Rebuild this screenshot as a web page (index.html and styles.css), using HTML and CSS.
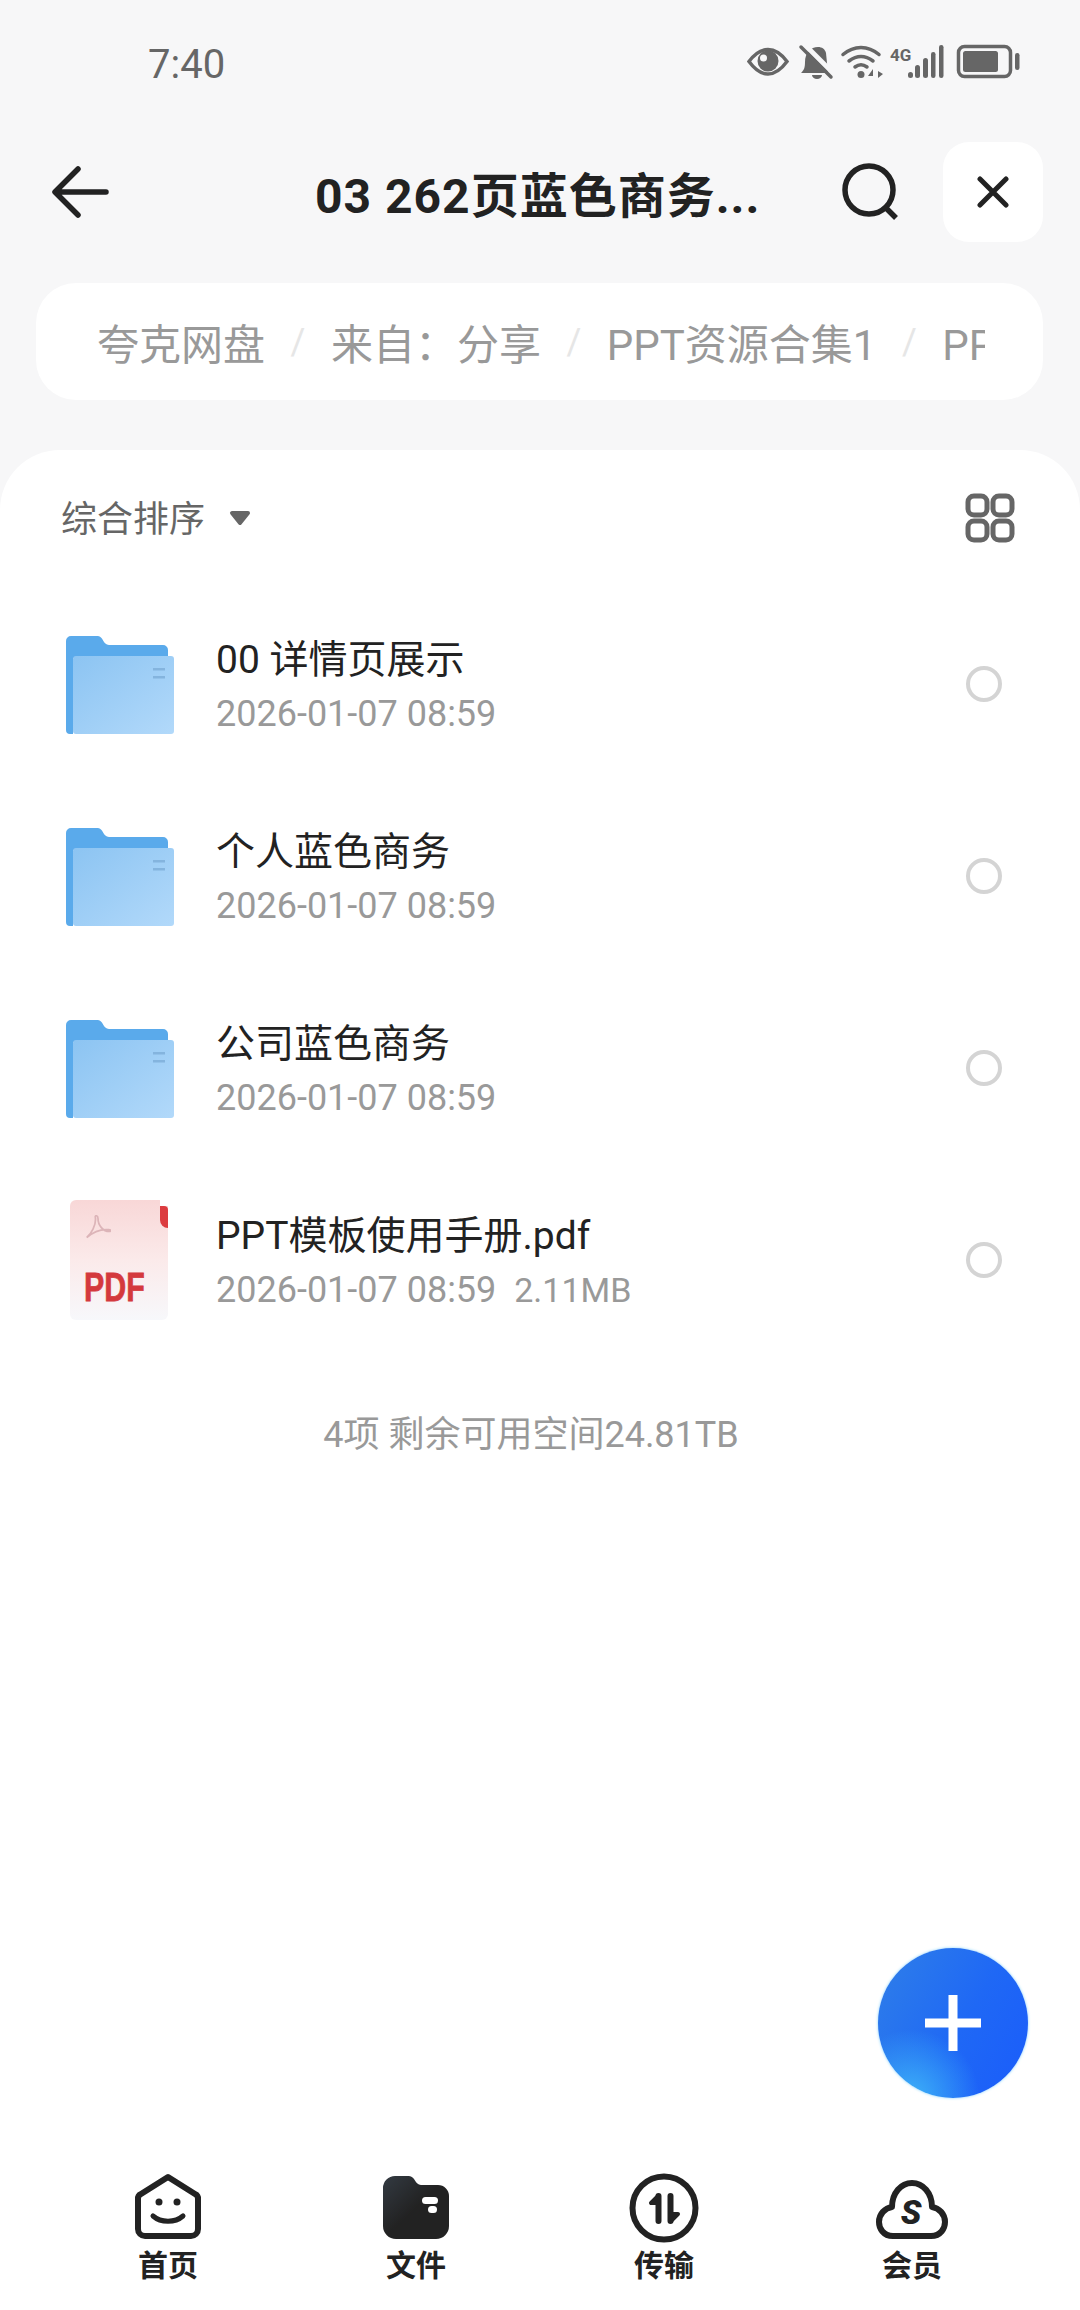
FILE: index.html
```html
<!DOCTYPE html>
<html lang="zh-CN">
<head>
  <meta charset="UTF-8">
  <title>夸克网盘</title>
  <link rel="stylesheet" href="styles.css">
</head>
<body>
  <div class="app">

    <div class="status">
      <span class="time">7:40</span>
      <svg class="status-icons" width="275" height="38" viewBox="0 0 275 38">
        <!-- eye -->
        <path d="M2 17.500C9 8 16 5.500 21 5.500S33 8 40 17.500C33 27 26 30 21 30S9 27 2 17.500Z" fill="none" stroke="#666" stroke-width="3.500"/>
        <circle cx="21" cy="17" r="10.500" fill="#666"/>
        <circle cx="16.500" cy="14" r="3.500" fill="#f7f7f8"/>
        <!-- bell off -->
        <path d="M54 29c3-3 4-5 4-11 0-9 6-15 13-15 4 0 7 2 8 6l2 20H54Z" fill="#666"/>
        <path d="M65 31h10a5 4 0 0 1-10 0Z" fill="#666"/>
        <path d="M56 -1 88 31" stroke="#f7f7f8" stroke-width="5"/>
        <path d="M54 3 84 33" stroke="#666" stroke-width="3.500" stroke-linecap="round"/>
        <!-- wifi -->
        <g fill="none" stroke="#666" stroke-width="3.500" stroke-linecap="round">
          <path d="M96 10.500C107 1 121 1 132 10.500"/>
          <path d="M102 17C110 11 118 11 126 17"/>
          <path d="M108 23C112 20 116 20 120 23"/>
        </g>
        <circle cx="114" cy="30.500" r="3.500" fill="#666"/>
        <path d="M126 34V25l-5 7h5ZM131 24v10l5-4-5-3Z" fill="#666"/>
        <!-- 4G and signal -->
        <text class="net" x="143" y="17">4G</text>
        <g fill="#666">
          <rect x="161" y="28" width="5" height="6" rx="2.500"/>
          <rect x="168" y="21" width="5" height="13" rx="2.500"/>
          <rect x="176" y="14" width="5" height="20" rx="2.500"/>
          <rect x="184" y="8" width="4.500" height="26" rx="2.200"/>
          <rect x="192" y="1" width="4.500" height="33" rx="2.200"/>
        </g>
        <!-- battery -->
        <rect x="211.500" y="2.500" width="52" height="30" rx="6" fill="none" stroke="#666" stroke-width="3.500"/>
        <rect x="216" y="7" width="35" height="21" rx="2.500" fill="#666"/>
        <rect x="268" y="9" width="4.500" height="17" rx="2.200" fill="#666"/>
      </svg>
    </div>

    <div class="topbar">
      <svg class="back" width="58" height="52" viewBox="0 0 58 52">
        <path d="M26 3 3 26l23 23M4 26h50" fill="none" stroke="#222" stroke-width="5.500" stroke-linecap="round" stroke-linejoin="round"/>
      </svg>
      <div class="title">03 262页蓝色商务...</div>
      <svg class="search" width="60" height="60" viewBox="0 0 60 60">
        <circle cx="28" cy="28" r="24" fill="none" stroke="#222" stroke-width="5.500"/>
        <path d="M45 46 55 56" stroke="#222" stroke-width="5.500"/>
      </svg>
      <div class="close-box">
        <svg width="32" height="32" viewBox="0 0 32 32">
          <path d="M3 3 29 29M29 3 3 29" stroke="#222" stroke-width="5" stroke-linecap="round"/>
        </svg>
      </div>
    </div>

    <div class="crumbs">
      <div class="crumbs-inner">
        <span>夸克网盘</span><i>/</i>
        <span>来自：分享</span><i>/</i>
        <span>PPT资源合集1</span><i>/</i>
        <span>PPT资源合集</span>
      </div>
    </div>

    <div class="sheet">
      <div class="sortbar">
        <div class="sort">
          <span class="sort-label">综合排序</span>
          <svg class="caret" width="22" height="16" viewBox="0 0 22 16">
            <path d="M3 3h16l-8 10Z" fill="#666" stroke="#666" stroke-width="4" stroke-linejoin="round"/>
          </svg>
        </div>
        <svg width="50" height="50" viewBox="0 0 50 50">
          <g fill="none" stroke="#666" stroke-width="5">
            <rect x="3" y="3" width="19" height="19" rx="6"/>
            <rect x="28" y="3" width="19" height="19" rx="6"/>
            <rect x="3" y="28" width="19" height="19" rx="6"/>
            <rect x="28" y="28" width="19" height="19" rx="6"/>
          </g>
        </svg>
      </div>

      <div class="files">
        <div class="row">
          <svg class="thumb" width="108" height="99" viewBox="0 0 108 99"><use href="#folder"/></svg>
          <div class="info">
            <div class="name">00 详情页展示</div>
            <div class="meta">2026-01-07 08:59</div>
          </div>
          <span class="radio"></span>
        </div>
        <div class="row">
          <svg class="thumb" width="108" height="99" viewBox="0 0 108 99"><use href="#folder"/></svg>
          <div class="info">
            <div class="name">个人蓝色商务</div>
            <div class="meta">2026-01-07 08:59</div>
          </div>
          <span class="radio"></span>
        </div>
        <div class="row">
          <svg class="thumb" width="108" height="99" viewBox="0 0 108 99"><use href="#folder"/></svg>
          <div class="info">
            <div class="name">公司蓝色商务</div>
            <div class="meta">2026-01-07 08:59</div>
          </div>
          <span class="radio"></span>
        </div>
        <div class="row">
          <div class="pdf">
            <svg class="acrobat" width="26" height="26" viewBox="0 0 30 30">
              <path d="M2 26C7 22 13 12 12 3c-1-3 3-3 3 1 0 8 6 15 13 15 2 0 2-2 0-2-8-1-18 2-26 9Z" fill="none" stroke="#dcb4b8" stroke-width="2"/>
            </svg>
            <span class="pdf-tab"></span>
            <span class="pdf-text">PDF</span>
          </div>
          <div class="info">
            <div class="name">PPT模板使用手册.pdf</div>
            <div class="meta">2026-01-07 08:59&nbsp;&nbsp;<span class="size">2.11MB</span></div>
          </div>
          <span class="radio"></span>
        </div>
      </div>

      <div class="summary">4项 剩余可用空间24.81TB</div>

      <div class="nav">
        <div class="tab">
          <svg width="70" height="70" viewBox="0 0 70 70">
            <path d="M35 5 62 22a5 5 0 0 1 3 5v30a7 7 0 0 1-7 7H12a7 7 0 0 1-7-7V27a5 5 0 0 1 3-5Z" fill="none" stroke="#222" stroke-width="6" stroke-linejoin="round"/>
            <circle cx="26" cy="30" r="3.500" fill="#222"/>
            <circle cx="44" cy="30" r="3.500" fill="#222"/>
            <path d="M20 44c8 7 22 7 30 0" fill="none" stroke="#222" stroke-width="5" stroke-linecap="round"/>
          </svg>
          <span>首页</span>
        </div>
        <div class="tab">
          <svg width="70" height="70" viewBox="0 0 70 70">
            <defs>
              <linearGradient id="fileDark" x1="0" y1="0" x2="1" y2="1">
                <stop offset="0" stop-color="#333a42"/>
                <stop offset="0.5" stop-color="#222"/>
              </linearGradient>
            </defs>
            <path d="M2 16A12 12 0 0 1 14 4h14c6 0 6 9 12 9h17a11 11 0 0 1 11 11v30a13 13 0 0 1-13 13H15A13 13 0 0 1 2 54Z" fill="url(#fileDark)"/>
            <rect x="41" y="25" width="16" height="7" rx="3.500" fill="#fff"/>
            <rect x="47" y="34" width="9" height="7" rx="3.500" fill="#fff"/>
          </svg>
          <span>文件</span>
        </div>
        <div class="tab">
          <svg width="70" height="72" viewBox="0 0 70 72">
            <circle cx="35" cy="36" r="31.500" fill="none" stroke="#222" stroke-width="6"/>
            <path d="M29.500 24V49M41.500 24V49" stroke="#222" stroke-width="6" stroke-linecap="round"/>
            <path d="M29 24 22 31h7ZM42 49l7-7h-7Z" fill="#222" stroke="#222" stroke-width="4" stroke-linejoin="round"/>
          </svg>
          <span class="tab-text-up">传输</span>
        </div>
        <div class="tab">
          <svg width="74" height="70" viewBox="0 0 74 70">
            <path d="M18 64C8 64 4 56 4 50c0-8 6-14 13-15C17 21 26 11 37 11s20 10 20 24c7 1 13 7 13 15 0 6-4 14-14 14Z" fill="none" stroke="#222" stroke-width="6" stroke-linejoin="round"/>
            <text class="vip" x="36" y="52">S</text>
          </svg>
          <span>会员</span>
        </div>
      </div>

      <div class="fab">
        <svg width="58" height="58" viewBox="0 0 58 58">
          <path d="M29 1v56M1 29h56" stroke="#fff" stroke-width="9"/>
        </svg>
      </div>
    </div>

  </div>

  <svg width="0" height="0" class="defs">
    <defs>
      <linearGradient id="folderFront" x1="0" y1="0" x2="1" y2="1">
        <stop offset="0" stop-color="#8cc4f2"/>
        <stop offset="1" stop-color="#b2d9fa"/>
      </linearGradient>
      <symbol id="folder" viewBox="0 0 108 99">
        <path d="M0 6a5 5 0 0 1 5-5h27c5 0 5 9 11 9h54a5 5 0 0 1 5 5v8H7v76H4a4 4 0 0 1-4-4Z" fill="#5aaaeb"/>
        <rect x="7" y="21" width="101" height="78" rx="3" fill="url(#folderFront)"/>
        <rect x="87" y="33" width="12" height="2.500" fill="#84b4de"/>
        <rect x="87" y="41" width="12" height="2.500" fill="#84b4de"/>
      </symbol>
    </defs>
  </svg>
</body>
</html>
```

FILE: styles.css
```css
* {
  box-sizing: border-box;
}
body {
  margin: 0;
  font-family: Roboto, "Noto Sans CJK SC", sans-serif;
  background: #f7f7f8;
}
.defs {
  position: absolute;
}
.app {
  width: 1080px;
  height: 2310px;
  display: flex;
  flex-direction: column;
  overflow: hidden;
}

.status {
  height: 142px;
  padding: 43px 58px 0 148px;
  display: flex;
  justify-content: space-between;
  align-items: flex-start;
}
.time {
  font-size: 40px;
  line-height: 44px;
  color: #666;
}
.status-icons {
  margin-top: 1px;
}
.net {
  font-size: 17px;
  font-weight: 700;
  fill: #666;
  font-family: Roboto, sans-serif;
}

.topbar {
  height: 100px;
  padding: 0 37px 0 52px;
  display: flex;
  align-items: center;
}
.back {
  flex: none;
}
.title {
  flex: 1;
  padding-left: 205px;
  font-size: 48px;
  font-weight: 700;
  letter-spacing: 1px;
  color: #222;
  white-space: nowrap;
}
.search {
  flex: none;
  margin-right: 42px;
}
.close-box {
  flex: none;
  width: 100px;
  height: 100px;
  background: #fff;
  border-radius: 26px;
  display: flex;
  align-items: center;
  justify-content: center;
}

.crumbs {
  margin: 41px 37px 0 36px;
  height: 117px;
  padding: 0 58px 0 61px;
  background: #fff;
  border-radius: 40px;
  display: flex;
  align-items: center;
}
.crumbs-inner {
  flex: 1;
  display: flex;
  align-items: center;
  gap: 25.500px;
  overflow: hidden;
  white-space: nowrap;
  font-size: 42px;
  color: #999;
}
.crumbs-inner i {
  font-style: normal;
  color: #e6e6e6;
  font-size: 36px;
}

.sheet {
  position: relative;
  flex: 1;
  margin-top: 50px;
  background: #fff;
  border-radius: 60px 60px 0 0;
  display: flex;
  flex-direction: column;
}
.sortbar {
  height: 94px;
  padding: 42px 65px 0 61px;
  display: flex;
  justify-content: space-between;
  align-items: center;
}
.sort {
  display: flex;
  align-items: center;
  font-size: 36px;
  color: #666;
}
.sort-label {
  margin-bottom: 4px;
}
.caret {
  margin-left: 24px;
}

.files {
  margin-top: 44px;
}
.row {
  height: 192px;
  padding: 0 78px 0 66px;
  display: flex;
  align-items: center;
}
.thumb {
  flex: none;
}
.info {
  flex: 1;
  margin-left: 42px;
  padding-top: 6px;
}
.name {
  font-size: 39px;
  line-height: 50px;
  color: #222;
}
.meta {
  margin-top: 4px;
  font-size: 36px;
  line-height: 50px;
  color: #999;
}
.size {
  font-size: 34px;
}
.radio {
  flex: none;
  width: 36px;
  height: 36px;
  border: 4px solid #d4d4d4;
  border-radius: 50%;
}

.pdf {
  position: relative;
  flex: none;
  width: 98px;
  height: 120px;
  margin: 0 6px 0 4px;
  border-radius: 6px;
  background: linear-gradient(180deg, #f8d7d7 0%, #fbeaea 50%, #f7f8fb 100%);
}
.acrobat {
  position: absolute;
  left: 15px;
  top: 15px;
}
.pdf-tab {
  position: absolute;
  right: 0;
  top: 6px;
  width: 8px;
  height: 22px;
  background: #dc3c40;
  border-radius: 0 4px 0 8px;
}
.pdf-tab::before {
  content: "";
  position: absolute;
  left: 0;
  top: -6px;
  width: 8px;
  height: 6px;
  background: #fff;
}
.pdf-text {
  position: absolute;
  left: 14px;
  top: 64px;
  font-family: "Liberation Sans", sans-serif;
  font-size: 41px;
  font-weight: 700;
  color: #d4393d;
  -webkit-text-stroke: 0.8px #d4393d;
  transform: scaleX(0.74);
  transform-origin: left;
}

.summary {
  margin-top: 49px;
  padding-right: 18px;
  text-align: center;
  font-size: 36px;
  color: #999;
}

.nav {
  margin-top: auto;
  height: 138px;
  padding: 0 40px;
  display: grid;
  grid-template-columns: repeat(4, 248px);
  justify-content: center;
}
.tab {
  display: flex;
  flex-direction: column;
  align-items: center;
  font-size: 30px;
  line-height: 36px;
  font-weight: 700;
  color: #222;
}
.tab span {
  margin-top: 6px;
}
.tab .tab-text-up {
  margin-top: 4px;
}
.vip {
  font-size: 34px;
  font-weight: 900;
  font-style: italic;
  text-anchor: middle;
  fill: #222;
}

.fab {
  position: absolute;
  right: 52px;
  bottom: 212px;
  width: 150px;
  height: 150px;
  border-radius: 50%;
  background:
    radial-gradient(circle at 22% 100%, #3db2f8 0%, rgba(61, 178, 248, 0) 36%),
    linear-gradient(120deg, #2f7fe8 0%, #1f68f5 55%, #1a5cfb 100%);
  box-shadow: 0 0 3px #7fd0ff;
  display: flex;
  align-items: center;
  justify-content: center;
}
```
